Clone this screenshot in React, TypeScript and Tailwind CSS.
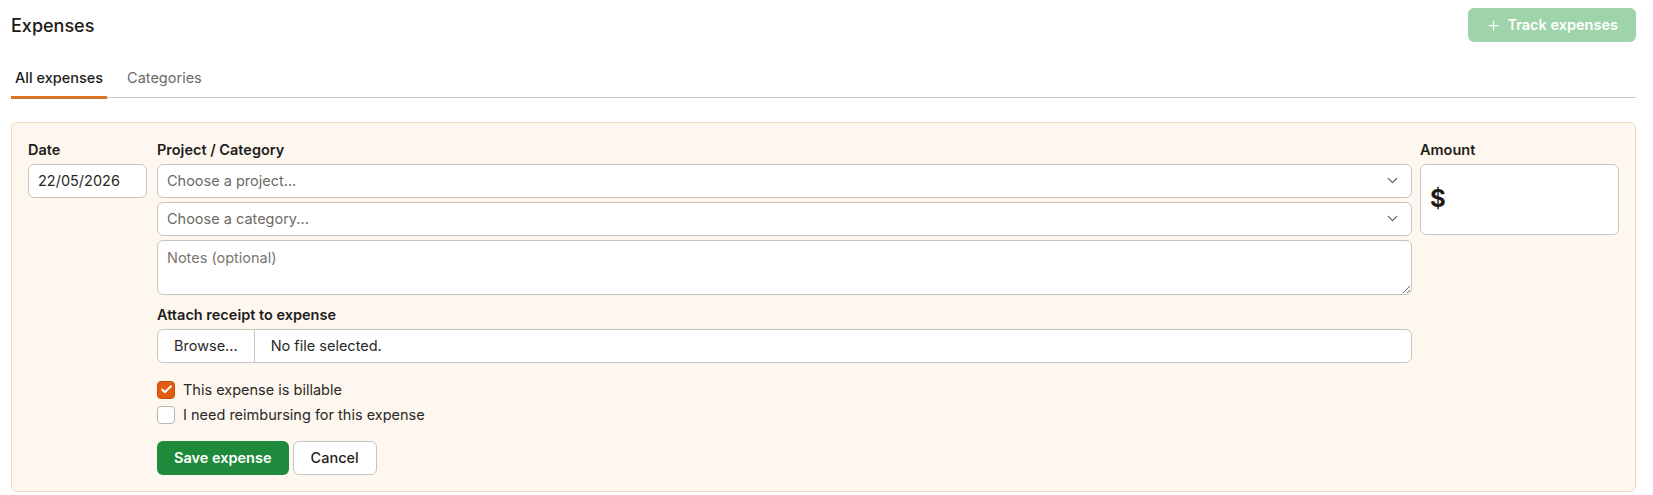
import React from 'react';
import { Check, ChevronDown, Plus } from 'lucide-react';

function SelectBox({ placeholder }: { placeholder: string }) {
    return (
        <div className="h-[34px] flex items-center justify-between pl-[9px] pr-[10px] bg-white border border-[#c9c4be] rounded-[6px]">
            <span className="text-[#6e6a66]">{placeholder}</span>
            <ChevronDown size={17} strokeWidth={1.5} className="text-[#55514d]" />
        </div>
    );
}

function CheckRow({ checked, label }: { checked?: boolean; label: string }) {
    return (
        <div className="flex items-center gap-[8px] h-[18px]">
            {checked ? (
                <div className="w-[18px] h-[18px] rounded-[4px] bg-[#e25d12] border border-[#c94e0a] flex items-center justify-center">
                    <Check size={13} strokeWidth={3.5} className="text-white" />
                </div>
            ) : (
                <div className="w-[18px] h-[18px] rounded-[4px] bg-white border border-[#b9b4ae]" />
            )}
            <span className="text-[#2a2826]">{label}</span>
        </div>
    );
}

export default function App() {
    return (
        <main
            className="bg-white min-h-screen pl-[11px] pr-[17px] text-[14.5px] text-[#1f1d1b]"
            style={{ fontFamily: 'Inter, "Noto Sans", sans-serif' }}
        >
            {/* Header */}
            <div className="pt-[8px] h-[42px] flex items-center justify-between">
                <h1 className="text-[18px] font-medium text-[#1c1b1a]">Expenses</h1>
                <button className="h-[34px] flex items-center gap-[6px] pl-[18px] pr-[18px] rounded-[6px] bg-[#9fd3aa] text-white font-semibold text-[14.5px]">
                    <Plus size={15} strokeWidth={2} />
                    Track expenses
                </button>
            </div>

            {/* Tabs */}
            <div className="mt-[25px] flex gap-[16px] border-b border-[#c9c9c9]">
                <div className="px-[4px] pb-[7px] border-b-[3px] border-[#d8742a] -mb-[2px] font-medium text-[#1c1b1a]">
                    All expenses
                </div>
                <div className="px-[4px] pb-[7px] text-[#6a6a6a]">Categories</div>
            </div>

            {/* Form panel */}
            <div className="mt-[24px] bg-[#fdf7f0] border border-[#f0dcc4] rounded-[6px] pt-[17px] pb-[16px] px-[16px] flex gap-[8px]">
                <div className="w-[119px] mr-[2px] flex flex-col gap-[4px]">
                    <label className="font-semibold h-[20px] leading-[20px]">Date</label>
                    <div className="h-[34px] flex items-center px-[9px] bg-white border border-[#c9c4be] rounded-[6px] text-[#2a2826]">
                        22/05/2026
                    </div>
                </div>

                <div className="flex-1 flex flex-col">
                    <label className="font-semibold h-[20px] leading-[20px]">Project / Category</label>
                    <div className="mt-[4px] flex flex-col gap-[4px]">
                        <SelectBox placeholder="Choose a project..." />
                        <SelectBox placeholder="Choose a category..." />
                        <textarea
                            placeholder="Notes (optional)"
                            className="h-[55px] px-[9px] py-[6px] bg-white border border-[#c9c4be] rounded-[6px] placeholder:text-[#7a7672] outline-none"
                        />
                    </div>

                    <label className="mt-[10px] font-semibold h-[20px] leading-[20px]">Attach receipt to expense</label>
                    <div className="mt-[4px] h-[34px] flex bg-white border border-[#c9c4be] rounded-[6px]">
                        <div className="px-[16px] flex items-center border-r border-[#c9c4be] text-[#2a2826]">Browse...</div>
                        <div className="pl-[16px] flex items-center text-[#2a2826]">No file selected.</div>
                    </div>

                    <div className="mt-[18px] flex flex-col gap-[7px]">
                        <CheckRow checked label="This expense is billable" />
                        <CheckRow label="I need reimbursing for this expense" />
                    </div>

                    <div className="mt-[17px] flex gap-[4px]">
                        <button className="h-[34px] px-[17px] rounded-[6px] bg-[#1f8a3c] text-white font-semibold">
                            Save expense
                        </button>
                        <button className="h-[34px] px-[17px] rounded-[6px] bg-white border border-[#c9c4be] text-[#1f1d1b] font-medium">
                            Cancel
                        </button>
                    </div>
                </div>

                <div className="w-[199px] flex flex-col gap-[4px]">
                    <label className="font-semibold h-[20px] leading-[20px]">Amount</label>
                    <div className="h-[71px] flex items-center px-[9px] bg-white border border-[#c9c4be] rounded-[6px]">
                        <span className="text-[24px] font-bold text-[#1c1b1a]">$</span>
                    </div>
                </div>
            </div>
        </main>
    );
}
